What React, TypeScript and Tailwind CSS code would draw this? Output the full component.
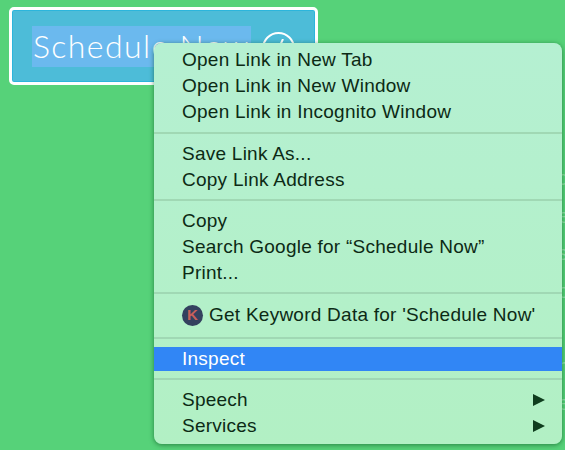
import { Fragment } from "react";

const GROUPS = [
  { items: ["Open Link in New Tab", "Open Link in New Window", "Open Link in Incognito Window"], sep: "pt-[7px] pb-[7px]" },
  { items: ["Save Link As...", "Copy Link Address"], sep: "pt-[6px] pb-[7px]" },
  { items: ["Copy", "Search Google for “Schedule Now”", "Print..."], sep: "pt-[6px] pb-[8px]" },
];

function Separator({ className }: { className: string }) {
  return (
    <div className={className}>
      <div className="h-[2px] bg-[#a0d8b4] w-full" />
    </div>
  );
}

function Row({ label }: { label: string }) {
  return <div className="h-[26px] leading-[26px] pl-[28px] pr-[26px] whitespace-nowrap">{label}</div>;
}

function SubRow({ label }: { label: string }) {
  return (
    <div className="h-[26px] leading-[26px] pl-[28px] pr-[17px] flex items-center justify-between">
      <span>{label}</span>
      <svg width="12" height="12" viewBox="0 0 12 12" className="shrink-0">
        <path d="M0 0 L12 6 L0 12 Z" fill="#0f3d1e" />
      </svg>
    </div>
  );
}

export default function App() {
  return (
    <div className="relative w-[565px] h-[450px] overflow-hidden bg-[#56d279] font-['Liberation_Sans',sans-serif]">
      <div className="pl-[9px] pt-[7px]">
        <div className="w-[309px] h-[78px] rounded-[5px] border-[3px] border-white bg-[#4dbcd8] shadow-[inset_0_0_0_1px_#2cb5dc] flex items-center pl-[20px] gap-[11px]">
          <span className="bg-[#6bb9ee] h-[41px] w-[219px] leading-[39px] pl-[1px] text-white text-[32px] font-light tracking-[1.4px] font-['Lato',sans-serif] whitespace-nowrap overflow-hidden">
            Schedule Now
          </span>
          <span className="w-[33px] h-[33px] mt-[5px] rounded-full border-[2px] border-white flex items-center justify-center">
            <svg width="20" height="20" viewBox="0 0 20 20">
              <path d="M4 8 L8 13 L14 0" fill="none" stroke="#fff" strokeWidth="2" />
            </svg>
          </span>
        </div>
      </div>

      {/* page text that peeks out to the right of the menu */}
      <div className="absolute left-[558px] top-[160px] text-[20px] leading-[37.5px] text-[#8fe3a6]">
        {["d", "e", "s", "o", ".", "h", "e"].map((c, i) => (
          <div key={i}>{c}</div>
        ))}
      </div>

      <div className="absolute left-[154px] top-[43px] w-[408px] h-[401px] rounded-[8px] bg-gradient-to-b from-[#b5f0d2] to-[#b2f0c4] shadow-[0_1px_5px_rgba(0,60,20,0.55)] text-[19px] tracking-[0.25px] text-[#0c2a15] pt-[4px] overflow-hidden">
        {GROUPS.map((group, i) => (
          <Fragment key={i}>
            {group.items.map(label => (
              <Row key={label} label={label} />
            ))}
            <Separator className={group.sep} />
          </Fragment>
        ))}
        <div className="h-[26px] leading-[26px] pl-[28px] flex items-center gap-[6px]">
          <span className="w-[21px] h-[21px] rounded-full bg-[#34415f] text-[#c9605a] text-[15px] font-bold flex items-center justify-center">K</span>
          <span>Get Keyword Data for 'Schedule Now'</span>
        </div>
        <Separator className="pt-[9px] pb-[8px]" />
        <div className="h-[24px] leading-[24px] pl-[28px] bg-[#3186f5] text-white">Inspect</div>
        <Separator className="pt-[7px] pb-[7px]" />
        <SubRow label="Speech" />
        <SubRow label="Services" />
      </div>
    </div>
  );
}
